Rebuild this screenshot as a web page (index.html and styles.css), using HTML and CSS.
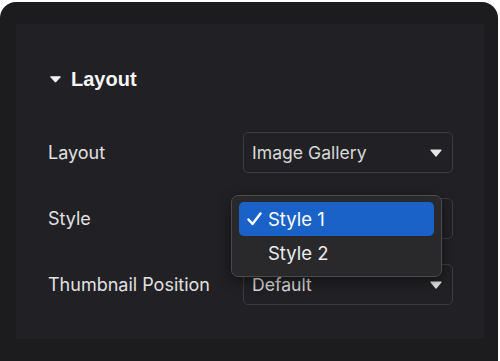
FILE: index.html
```html
<!doctype html>
<html lang="en">
    <head>
        <meta charset="UTF-8" />
        <title>Layout settings</title>
        <link rel="stylesheet" href="styles.css">
    </head>
    <body>
        <div class="card">
            <div class="panel">
                <div class="heading">
                    <svg class="caret-head" width="11" height="7" viewBox="0 0 11 7">
                        <path d="M0.5 0.8 L10.5 0.8 L5.5 6.2 Z" fill="#f2f2f2" stroke="#f2f2f2" stroke-linejoin="round" stroke-width="1"/>
                    </svg>
                    <span>Layout</span>
                </div>

                <div class="rows">
                    <div class="row">
                        <div class="label">Layout</div>
                        <div class="select">
                            <span>Image Gallery</span>
                            <svg class="caret" width="12" height="8" viewBox="0 0 12 8">
                                <path d="M1 1 L11 1 L6 7 Z" fill="#e6e6e6" stroke="#e6e6e6" stroke-linejoin="round" stroke-width="1.2"/>
                            </svg>
                        </div>
                    </div>

                    <div class="row">
                        <div class="label">Style</div>
                        <div class="select">
                            <svg class="caret" width="12" height="8" viewBox="0 0 12 8">
                                <path d="M1 1 L11 1 L6 7 Z" fill="#e6e6e6" stroke="#e6e6e6" stroke-linejoin="round" stroke-width="1.2"/>
                            </svg>
                            <div class="menu">
                                <div class="option selected">
                                    <svg class="check" width="15" height="14" viewBox="0 0 15 14">
                                        <path d="M1.5 7.5 L5.5 12 L13.5 1.5" fill="none" stroke="#ffffff" stroke-width="2.4" stroke-linecap="round" stroke-linejoin="round"/>
                                    </svg>
                                    <span>Style 1</span>
                                </div>
                                <div class="option">
                                    <span>Style 2</span>
                                </div>
                            </div>
                        </div>
                    </div>

                    <div class="row">
                        <div class="label">Thumbnail Position</div>
                        <div class="select">
                            <span>Default</span>
                            <svg class="caret" width="12" height="8" viewBox="0 0 12 8">
                                <path d="M1 1 L11 1 L6 7 Z" fill="#e6e6e6" stroke="#e6e6e6" stroke-linejoin="round" stroke-width="1.2"/>
                            </svg>
                        </div>
                    </div>
                </div>
            </div>
        </div>
    </body>
</html>
```

FILE: styles.css
```css
body {
    margin: 0;
    background-color: #ffffff;
    font-family: "Inter", "Liberation Sans", sans-serif;
}

.card {
    margin-top: 2px;
    width: 498px;
    height: 359px;
    background-color: #1c1c1f;
    border-radius: 16px 16px 0 0;
    padding: 22px 14px 0 16px;
    box-sizing: border-box;
}

.panel {
    background-color: #212125;
    height: 315px;
    padding: 43px 31px 0 32px;
    box-sizing: border-box;
}

.heading {
    display: flex;
    align-items: center;
    height: 24px;
    font-family: "Liberation Sans", Arial, sans-serif;
    font-weight: bold;
    font-size: 20px;
    color: #f6f6f6;
}

.caret-head {
    margin-left: 2px;
    margin-right: 10px;
    margin-top: 1px;
}

.rows {
    margin-top: 41px;
    display: flex;
    flex-direction: column;
    gap: 25px;
}

.row {
    display: flex;
    align-items: center;
    height: 41px;
}

.label {
    width: 195px;
    font-size: 18px;
    color: #e0e0e0;
}

.select {
    position: relative;
    width: 210px;
    height: 41px;
    box-sizing: border-box;
    border: 1px solid #3b3b40;
    border-radius: 5px;
    display: flex;
    align-items: center;
    justify-content: space-between;
    padding: 0 10px 0 8px;
    font-size: 17.6px;
    color: #d8d8d8;
}

.caret {
    margin-top: 1px;
    margin-left: auto;
}

.menu {
    position: absolute;
    left: -13px;
    top: -4px;
    width: 211px;
    box-sizing: border-box;
    padding: 6px 7px;
    background-color: #29292c;
    border: 1px solid #4a4a4f;
    border-radius: 7px;
    box-shadow: 0 4px 14px rgba(0, 0, 0, 0.45);
    z-index: 10;
}

.option {
    display: flex;
    align-items: center;
    height: 34px;
    padding-left: 29px;
    border-radius: 5px;
    font-size: 18.5px;
    color: #ececec;
}

.option.selected {
    background-color: #1b62c8;
    color: #ffffff;
    padding-left: 8px;
}

.check {
    margin-right: 6px;
}
```
